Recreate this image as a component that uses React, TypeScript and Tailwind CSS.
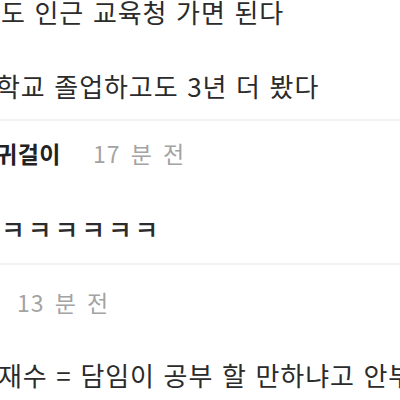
export default function App() {
  const body = "text-[26px] leading-[24px] text-[#2b2b2b] whitespace-nowrap tracking-[0.9px] [word-spacing:2px]";
  const time = "text-[23px] leading-[24px] text-[#a3a3a3] whitespace-nowrap tracking-[1px] [word-spacing:4px]";
  return (
    <div className="w-[400px] h-[400px] overflow-hidden bg-white font-['Noto_Sans_CJK_KR','Noto_Sans',sans-serif]">
      <div className="flex flex-col">
        <div className={`${body} h-6 ml-[1px]`}>도 인근 교육청 가면 된다</div>
        <div className={`${body} h-6 mt-[50px] -ml-[4px]`}>학교 졸업하고도 3년 더 봤다</div>
        <div className="h-[2px] mt-[21px] bg-[#f3f3f3]" />
        <div className="h-6 mt-[20px] flex items-center gap-[32px] -ml-[4px]">
          <span className="text-[23px] leading-[24px] font-bold text-[#222222] whitespace-nowrap tracking-[0.5px]">귀걸이</span>
          <span className={time}>17 분 전</span>
        </div>
        <div className={`${body} h-6 mt-[52px] ml-[1px] tracking-[2.8px] font-medium`}>ㅋㅋㅋㅋㅋㅋ</div>
        <div className="h-[2px] mt-[22px] bg-[#f3f3f3]" />
        <div className="h-6 mt-[25px] flex items-center ml-[17px]">
          <span className={time}>13 분 전</span>
        </div>
        <div className={`${body} h-6 mt-[49px] -ml-[2px]`}>재수 = 담임이 공부 할 만하냐고 안부 전화</div>
      </div>
    </div>
  );
}
